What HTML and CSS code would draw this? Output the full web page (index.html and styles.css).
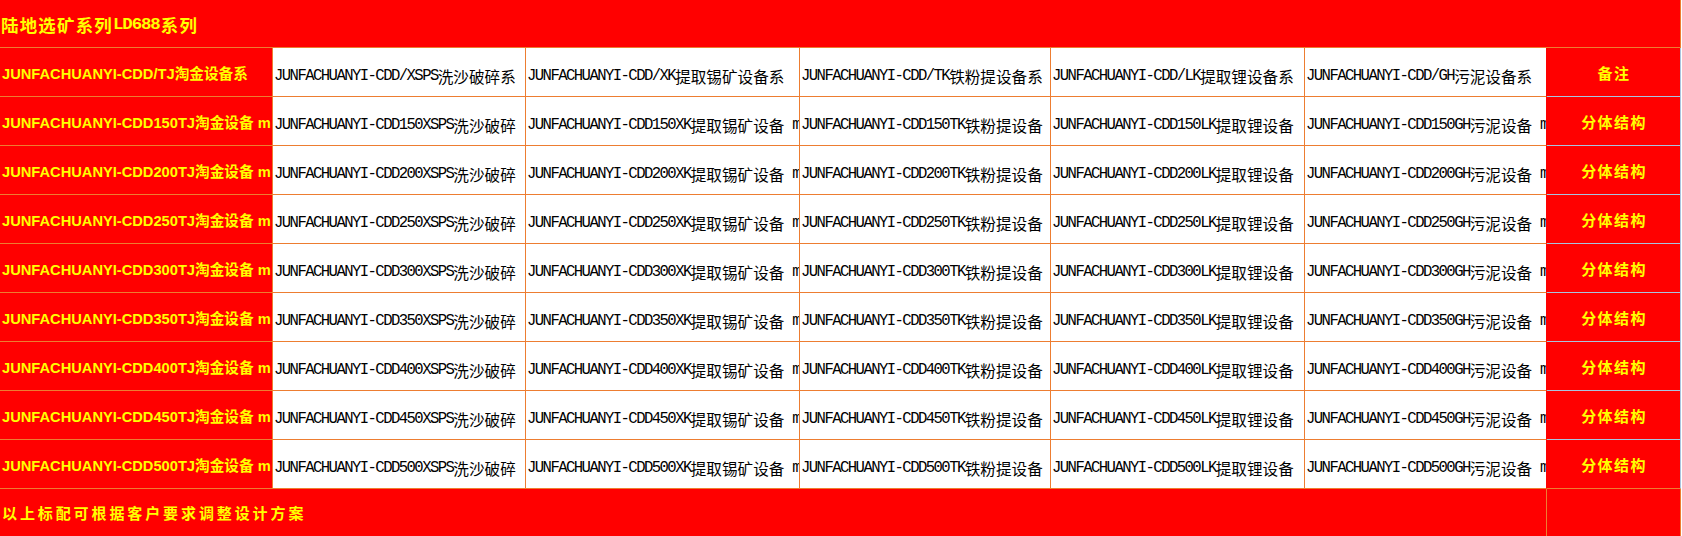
FILE: index.html
```html
<!DOCTYPE html>
<html lang="zh-CN">
<head>
<meta charset="utf-8">
<title>陆地选矿系列LD688系列</title>
<link rel="stylesheet" href="styles.css">
</head>
<body>
<div class="sheet">
  <div class="cell title">陆地选矿系列<span class="en">LD688</span>系列</div>

  <div class="cell red-col">JUNFACHUANYI-CDD/TJ淘金设备系</div>
  <div class="cell data"><span class="en">JUNFACHUANYI-CDD/XSPS</span>洗沙破碎系</div>
  <div class="cell data"><span class="en">JUNFACHUANYI-CDD/XK</span>提取锡矿设备系</div>
  <div class="cell data"><span class="en">JUNFACHUANYI-CDD/TK</span>铁粉提设备系</div>
  <div class="cell data"><span class="en">JUNFACHUANYI-CDD/LK</span>提取锂设备系</div>
  <div class="cell data last-data"><span class="en">JUNFACHUANYI-CDD/GH</span>污泥设备系</div>
  <div class="cell note note-head">备注</div>

  <div class="cell red-col">JUNFACHUANYI-CDD150TJ淘金设备 m</div>
  <div class="cell data"><span class="en">JUNFACHUANYI-CDD150XSPS</span>洗沙破碎</div>
  <div class="cell data"><span class="en">JUNFACHUANYI-CDD150XK</span>提取锡矿设备<span class="en"> m</span></div>
  <div class="cell data"><span class="en">JUNFACHUANYI-CDD150TK</span>铁粉提设备</div>
  <div class="cell data"><span class="en">JUNFACHUANYI-CDD150LK</span>提取锂设备</div>
  <div class="cell data last-data"><span class="en">JUNFACHUANYI-CDD150GH</span>污泥设备<span class="en"> m</span></div>
  <div class="cell note">分体结构</div>

  <div class="cell red-col">JUNFACHUANYI-CDD200TJ淘金设备 m</div>
  <div class="cell data"><span class="en">JUNFACHUANYI-CDD200XSPS</span>洗沙破碎</div>
  <div class="cell data"><span class="en">JUNFACHUANYI-CDD200XK</span>提取锡矿设备<span class="en"> m</span></div>
  <div class="cell data"><span class="en">JUNFACHUANYI-CDD200TK</span>铁粉提设备</div>
  <div class="cell data"><span class="en">JUNFACHUANYI-CDD200LK</span>提取锂设备</div>
  <div class="cell data last-data"><span class="en">JUNFACHUANYI-CDD200GH</span>污泥设备<span class="en"> m</span></div>
  <div class="cell note">分体结构</div>

  <div class="cell red-col">JUNFACHUANYI-CDD250TJ淘金设备 m</div>
  <div class="cell data"><span class="en">JUNFACHUANYI-CDD250XSPS</span>洗沙破碎</div>
  <div class="cell data"><span class="en">JUNFACHUANYI-CDD250XK</span>提取锡矿设备<span class="en"> m</span></div>
  <div class="cell data"><span class="en">JUNFACHUANYI-CDD250TK</span>铁粉提设备</div>
  <div class="cell data"><span class="en">JUNFACHUANYI-CDD250LK</span>提取锂设备</div>
  <div class="cell data last-data"><span class="en">JUNFACHUANYI-CDD250GH</span>污泥设备<span class="en"> m</span></div>
  <div class="cell note">分体结构</div>

  <div class="cell red-col">JUNFACHUANYI-CDD300TJ淘金设备 m</div>
  <div class="cell data"><span class="en">JUNFACHUANYI-CDD300XSPS</span>洗沙破碎</div>
  <div class="cell data"><span class="en">JUNFACHUANYI-CDD300XK</span>提取锡矿设备<span class="en"> m</span></div>
  <div class="cell data"><span class="en">JUNFACHUANYI-CDD300TK</span>铁粉提设备</div>
  <div class="cell data"><span class="en">JUNFACHUANYI-CDD300LK</span>提取锂设备</div>
  <div class="cell data last-data"><span class="en">JUNFACHUANYI-CDD300GH</span>污泥设备<span class="en"> m</span></div>
  <div class="cell note">分体结构</div>

  <div class="cell red-col">JUNFACHUANYI-CDD350TJ淘金设备 m</div>
  <div class="cell data"><span class="en">JUNFACHUANYI-CDD350XSPS</span>洗沙破碎</div>
  <div class="cell data"><span class="en">JUNFACHUANYI-CDD350XK</span>提取锡矿设备<span class="en"> m</span></div>
  <div class="cell data"><span class="en">JUNFACHUANYI-CDD350TK</span>铁粉提设备</div>
  <div class="cell data"><span class="en">JUNFACHUANYI-CDD350LK</span>提取锂设备</div>
  <div class="cell data last-data"><span class="en">JUNFACHUANYI-CDD350GH</span>污泥设备<span class="en"> m</span></div>
  <div class="cell note">分体结构</div>

  <div class="cell red-col">JUNFACHUANYI-CDD400TJ淘金设备 m</div>
  <div class="cell data"><span class="en">JUNFACHUANYI-CDD400XSPS</span>洗沙破碎</div>
  <div class="cell data"><span class="en">JUNFACHUANYI-CDD400XK</span>提取锡矿设备<span class="en"> m</span></div>
  <div class="cell data"><span class="en">JUNFACHUANYI-CDD400TK</span>铁粉提设备</div>
  <div class="cell data"><span class="en">JUNFACHUANYI-CDD400LK</span>提取锂设备</div>
  <div class="cell data last-data"><span class="en">JUNFACHUANYI-CDD400GH</span>污泥设备<span class="en"> m</span></div>
  <div class="cell note">分体结构</div>

  <div class="cell red-col">JUNFACHUANYI-CDD450TJ淘金设备 m</div>
  <div class="cell data"><span class="en">JUNFACHUANYI-CDD450XSPS</span>洗沙破碎</div>
  <div class="cell data"><span class="en">JUNFACHUANYI-CDD450XK</span>提取锡矿设备<span class="en"> m</span></div>
  <div class="cell data"><span class="en">JUNFACHUANYI-CDD450TK</span>铁粉提设备</div>
  <div class="cell data"><span class="en">JUNFACHUANYI-CDD450LK</span>提取锂设备</div>
  <div class="cell data last-data"><span class="en">JUNFACHUANYI-CDD450GH</span>污泥设备<span class="en"> m</span></div>
  <div class="cell note">分体结构</div>

  <div class="cell red-col">JUNFACHUANYI-CDD500TJ淘金设备 m</div>
  <div class="cell data"><span class="en">JUNFACHUANYI-CDD500XSPS</span>洗沙破碎</div>
  <div class="cell data"><span class="en">JUNFACHUANYI-CDD500XK</span>提取锡矿设备<span class="en"> m</span></div>
  <div class="cell data"><span class="en">JUNFACHUANYI-CDD500TK</span>铁粉提设备</div>
  <div class="cell data"><span class="en">JUNFACHUANYI-CDD500LK</span>提取锂设备</div>
  <div class="cell data last-data"><span class="en">JUNFACHUANYI-CDD500GH</span>污泥设备<span class="en"> m</span></div>
  <div class="cell note">分体结构</div>

  <div class="cell footer">以上标配可根据客户要求调整设计方案</div>
  <div class="cell footer-end"></div>
</div>
</body>
</html>
```
FILE: styles.css
```css
html, body {
  margin: 0;
  padding: 0;
  background: #ffffff;
  overflow: hidden;
}

.sheet {
  display: grid;
  grid-template-columns: 273px 253px 274px 251px 254px 242px 134px;
  grid-template-rows: 48px repeat(9, 49px) 49px;
  width: 1681px;
}

.cell {
  box-sizing: border-box;
  display: flex;
  align-items: center;
  white-space: pre;
  overflow: hidden;
  border-right: 1px solid #ed7d31;
  border-bottom: 1px solid #ed7d31;
  line-height: 20px;
  font-family: "Noto Sans CJK SC", sans-serif;
}

.title {
  grid-column: 1 / -1;
  background: #ff0000;
  color: #ffff00;
  font-weight: 700;
  font-size: 17.4px;
  letter-spacing: 1.27px;
  padding: 2px 0 0 1px;
}

.title .en {
  font-family: "Liberation Mono", monospace;
  font-weight: 700;
  letter-spacing: -1.1px;
  margin-right: 1.2px;
}

.red-col {
  background: #ff0000;
  color: #ffff00;
  font-family: "Liberation Sans", "Noto Sans CJK SC", sans-serif;
  font-weight: 700;
  font-size: 14.67px;
  padding: 3px 0 0 2px;
}

.data {
  background: #ffffff;
  color: #000000;
  font-size: 15.6px;
  padding: 8px 0 0 1px;
}

.data .en {
  font-family: "Liberation Mono", monospace;
  letter-spacing: -1.56px;
}

.last-data {
  border-right-color: #ff0000;
}

.note {
  background: #ff0000;
  color: #ffff00;
  font-weight: 700;
  font-size: 15px;
  letter-spacing: 1.4px;
  justify-content: center;
  padding: 2px 0 0 1px;
  border-right-color: #a9c4df;
  border-bottom-color: #a9c4df;
}

.note-head {
  padding-top: 1px;
}

.sheet > .note:nth-last-child(3) {
  border-bottom-color: #ed7d31;
}

.footer {
  grid-column: 1 / 7;
  background: #ff0000;
  color: #ffff00;
  font-weight: 700;
  font-size: 15px;
  letter-spacing: 2.9px;
  padding: 0 0 0 2px;
}

.footer-end {
  background: #ff0000;
}
```
